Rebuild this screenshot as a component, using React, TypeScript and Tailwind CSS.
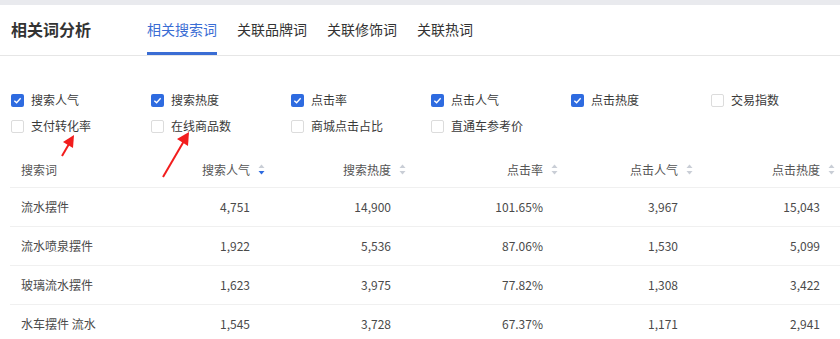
import React from 'react';

const FONT = { fontFamily: '"Noto Sans CJK SC", "Noto Sans", sans-serif' };

const tabs = ['相关搜索词', '关联品牌词', '关联修饰词', '关联热词'];

const options = [
  { label: '搜索人气', checked: true },
  { label: '搜索热度', checked: true },
  { label: '点击率', checked: true },
  { label: '点击人气', checked: true },
  { label: '点击热度', checked: true },
  { label: '交易指数', checked: false },
  { label: '支付转化率', checked: false },
  { label: '在线商品数', checked: false },
  { label: '商城点击占比', checked: false },
  { label: '直通车参考价', checked: false },
];

const columns = ['搜索人气', '搜索热度', '点击率', '点击人气', '点击热度'];

const rows = [
  ['流水摆件', '4,751', '14,900', '101.65%', '3,967', '15,043'],
  ['流水喷泉摆件', '1,922', '5,536', '87.06%', '1,530', '5,099'],
  ['玻璃流水摆件', '1,623', '3,975', '77.82%', '1,308', '3,422'],
  ['水车摆件 流水', '1,545', '3,728', '67.37%', '1,171', '2,941'],
];

const Checkbox: React.FC<{ checked: boolean }> = ({ checked }) =>
  checked ? (
    <span className="w-[13px] h-[13px] rounded-[2px] bg-[#2e6be0] flex items-center justify-center">
      <svg width="9" height="9" viewBox="0 0 10 10">
        <path d="M1.5 5.2 L4 7.5 L8.5 2.5" stroke="white" strokeWidth="1.5" fill="none" />
      </svg>
    </span>
  ) : (
    <span className="w-[13px] h-[13px] rounded-[2px] border border-[#dcdcdc] bg-white" />
  );

const SortIcon: React.FC<{ active?: boolean }> = ({ active }) => (
  <svg width="7" height="11" viewBox="0 0 7 11" className="ml-[8px] -mr-[15px]">
    <path d="M3.5 0.5 L6.5 4 L0.5 4 Z" fill="#c9ced6" />
    <path d="M3.5 10.5 L6.5 7 L0.5 7 Z" fill={active ? '#2e6be0' : '#c9ced6'} />
  </svg>
);

const colClass = 'grid grid-cols-[120px_136px_141px_152px_135px_146px]';

export default function App() {
  return (
    <div className="relative w-[840px] h-[339px] bg-white overflow-hidden" style={FONT}>
      <div className="h-[5px] bg-[#e9eaee]" />

      {/* header + tabs */}
      <div className="flex items-stretch h-[51px] border-b border-[#e6e6e6] pl-[11px]">
        <div className="text-[16px] font-bold text-[#333] flex items-center pb-[2px]">相关词分析</div>
        <div className="flex gap-[20px] ml-[56px]">
          {tabs.map((t, i) => (
            <div
              key={t}
              className={`relative flex items-center text-[14px] pb-[1px] ${
                i === 0 ? 'text-[#3a6dd4]' : 'text-[#333]'
              }`}
            >
              {t}
              {i === 0 && <span className="absolute left-0 right-0 bottom-0 h-[3px] bg-[#3a6dd4]" />}
            </div>
          ))}
        </div>
      </div>

      {/* indicator options */}
      <div className="grid grid-cols-[140px_140px_140px_140px_140px_140px] pl-[11px] pt-[31px]">
        {options.map((o) => (
          <div key={o.label} className="flex items-center h-[26px] gap-[7px] text-[12px] text-[#3a3a3a]">
            <Checkbox checked={o.checked} />
            <span>{o.label}</span>
          </div>
        ))}
      </div>

      {/* table */}
      <div className="ml-[10px] mt-[13px] text-[12px]">
        <div className={`${colClass} h-[36px] border-b border-[#f0f0f0] text-[#555]`}>
          <div className="flex items-center pl-[11px]">搜索词</div>
          {columns.map((c, i) => (
            <div
              key={c}
              className={`flex items-center justify-end ${i === 4 ? 'pr-[20px]' : 'pr-[16px]'}`}
            >
              <span>{c}</span>
              <SortIcon active={i === 0} />
            </div>
          ))}
        </div>
        {rows.map((r) => (
          <div key={r[0]} className={`${colClass} h-[39px] border-b border-[#f0f0f0] text-[#4a4a4a]`}>
            {r.map((v, i) => (
              <div
                key={i}
                className={`flex items-center ${
                  i === 0 ? 'pl-[11px]' : i === 5 ? 'justify-end pr-[20px]' : 'justify-end pr-[16px]'
                }`}
              >
                {v}
              </div>
            ))}
          </div>
        ))}
      </div>

      {/* annotation arrows */}
      <svg className="absolute inset-0 pointer-events-none" width="840" height="339">
        <line x1="62" y1="156" x2="69" y2="144" stroke="#f21d1d" strokeWidth="2" />
        <path d="M74 135 L63 142 L73 148 Z" fill="#f21d1d" />
        <line x1="163" y1="177" x2="184" y2="141" stroke="#f21d1d" strokeWidth="2" />
        <path d="M189 132 L177 139 L188 146 Z" fill="#f21d1d" />
      </svg>
    </div>
  );
}
